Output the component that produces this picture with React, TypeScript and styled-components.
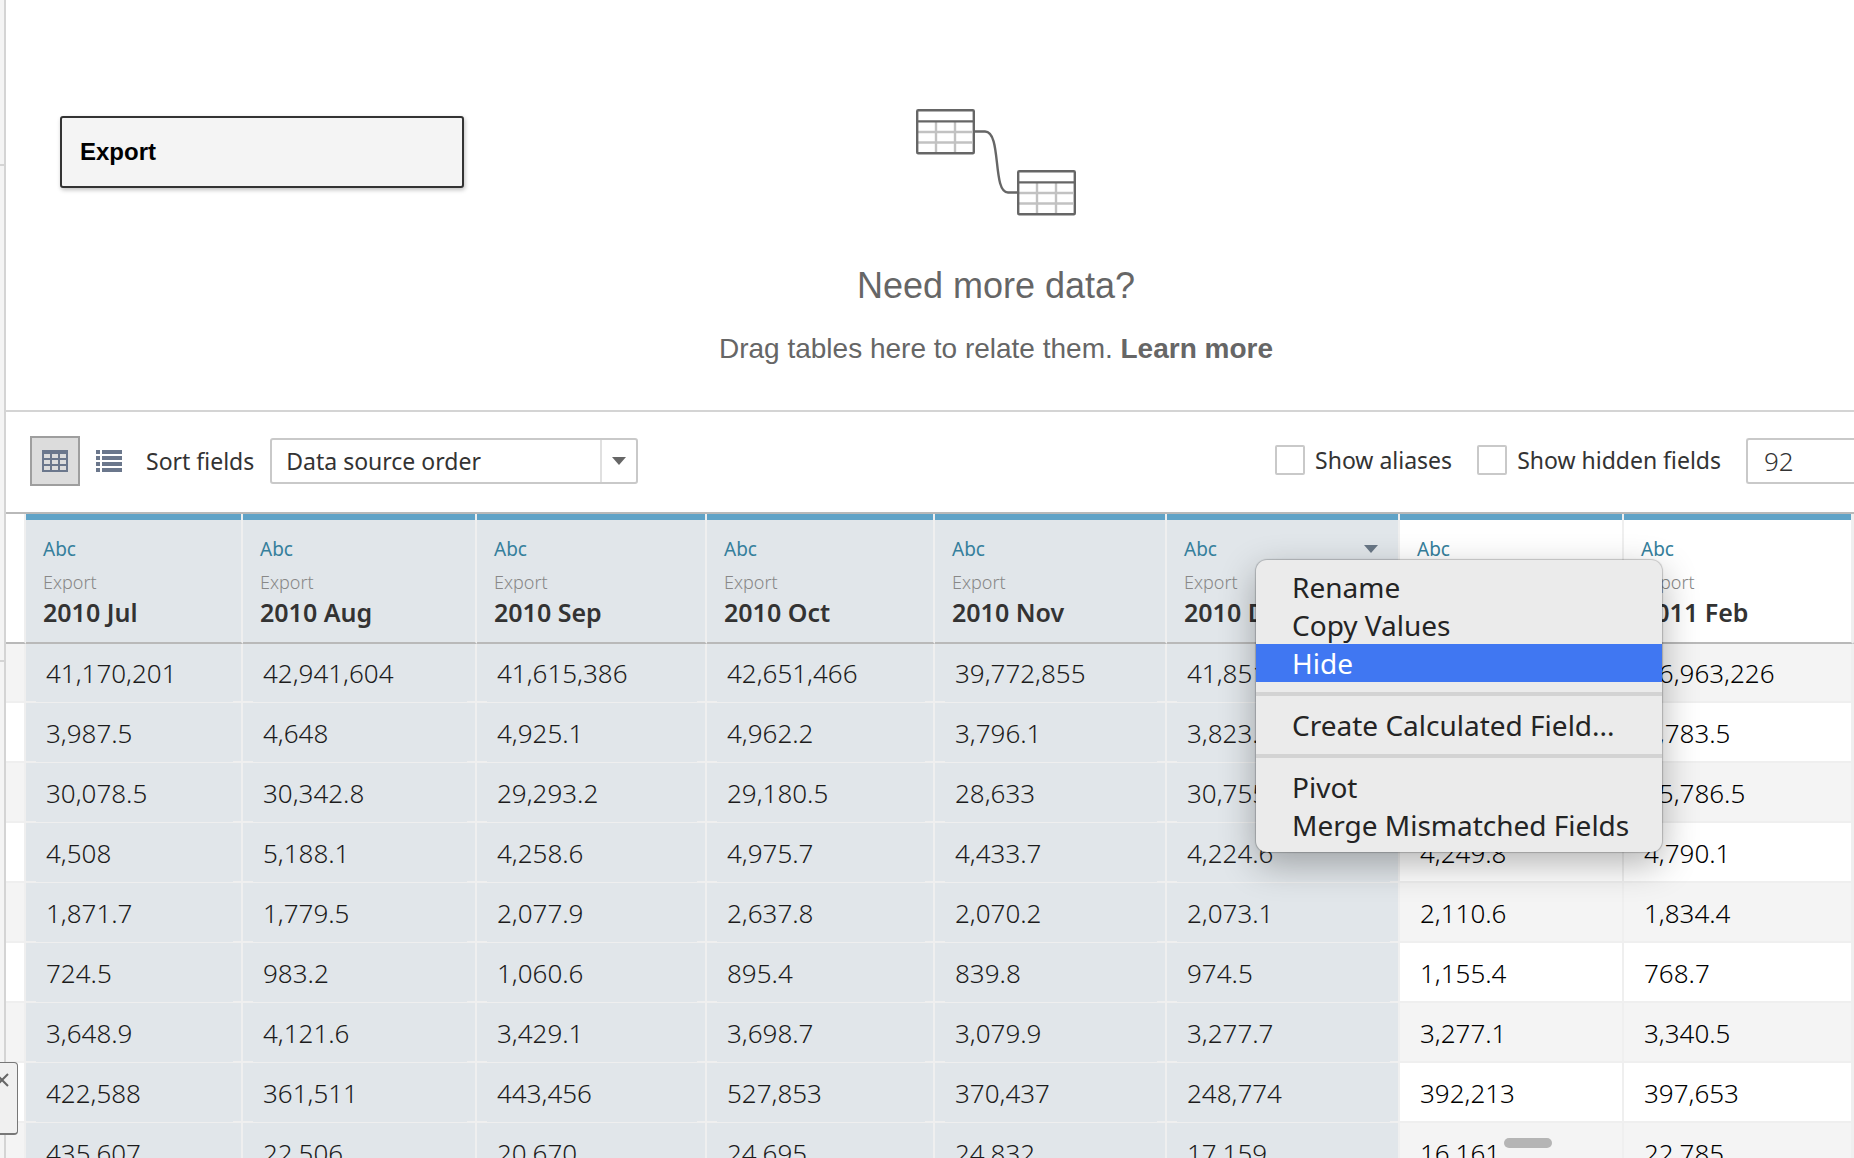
import React from 'react';
import styled, { createGlobalStyle, css } from 'styled-components';

const ui = css`
  font-family: 'Noto Sans', 'Open Sans', sans-serif;
`;

const GlobalStyle = createGlobalStyle`
  * { box-sizing: border-box; }
  body { margin: 0; background: #fff; overflow: hidden; }
  button, input, select { font: inherit; color: inherit; margin: 0; }
`;

const Shell = styled.div`
  ${ui}
  position: relative;
  display: flex;
  height: 100vh;
  overflow: hidden;
  color: #333;
`;

const SideStrip = styled.aside`
  flex: none;
  width: 6px;
  display: grid;
  grid-template-rows: 166px 496px 1fr;
  background: #f4f4f4;
  border-right: 2px solid #d4d4d4;
`;

const SideSection = styled.div`
  border-bottom: 2px solid #d4d4d4;
`;

const Main = styled.main`
  flex: 1;
  min-width: 0;
  display: flex;
  flex-direction: column;
`;

const Canvas = styled.section`
  flex: none;
  position: relative;
  height: 412px;
  padding-top: 109px;
  border-bottom: 2px solid #d4d4d4;
  font-family: 'Liberation Sans', Arial, sans-serif;
`;

const TableNode = styled.button`
  position: absolute;
  left: 54px;
  top: 116px;
  width: 404px;
  height: 72px;
  padding: 0 18px;
  text-align: left;
  background: #f4f4f4;
  border: 2px solid #333;
  border-radius: 3px;
  box-shadow: 1px 2px 4px rgba(0, 0, 0, 0.25);
  font-size: 24px;
  font-weight: 700;
  color: #000;
`;

const Hint = styled.div`
  display: flex;
  flex-direction: column;
  align-items: center;
  padding-left: 132px;
  color: #666;
`;

const HintTitle = styled.h2`
  margin: 49px 0 0;
  font-size: 36px;
  line-height: 40px;
  font-weight: 400;
`;

const HintText = styled.p`
  margin: 27px 0 0;
  font-size: 28px;
  line-height: 32px;
`;

const HintLink = styled.a`
  color: inherit;
  font-weight: 700;
  text-decoration: none;
`;

const Toolbar = styled.div`
  flex: none;
  display: flex;
  align-items: center;
  height: 102px;
  padding: 0 0 2px 24px;
  border-bottom: 2px solid #b9b9b9;
  font-size: 23px;
  white-space: nowrap;
`;

const ViewSwitch = styled.div`
  display: flex;
  gap: 4px;
`;

const ViewButton = styled.button<{ $active?: boolean }>`
  display: grid;
  place-items: center;
  width: 50px;
  height: 50px;
  padding: 0;
  color: #6b778c;
  background: ${(p) => (p.$active ? '#dcdcdc' : 'transparent')};
  border: 2px solid ${(p) => (p.$active ? '#9e9e9e' : 'transparent')};
`;

const SortLabel = styled.label`
  margin-left: 12px;
`;

const SelectBox = styled.div`
  display: flex;
  align-items: center;
  position: relative;
  width: 368px;
  height: 46px;
  margin-left: 16px;
  border: 2px solid #c9c9c9;
  border-radius: 3px;
`;

const Select = styled.select`
  appearance: none;
  width: 100%;
  height: 100%;
  padding: 0 14px;
  background: transparent;
  border: 0;
`;

const SelectArrow = styled.span`
  position: absolute;
  right: 0;
  top: 0;
  display: grid;
  place-items: center;
  width: 36px;
  height: 100%;
  border-left: 2px solid #e0e0e0;
  color: #666;
  pointer-events: none;
`;

const Options = styled.div`
  display: flex;
  align-items: center;
  gap: 25px;
  margin-left: auto;
`;

const CheckLabel = styled.label`
  display: flex;
  align-items: center;
  gap: 10px;
  margin-bottom: 3px;
`;

const Check = styled.input`
  appearance: none;
  width: 30px;
  height: 30px;
  background: #fff;
  border: 2px solid #c9c9c9;
  border-radius: 2px;
`;

const RowCount = styled.input`
  width: 108px;
  height: 46px;
  padding: 0 16px;
  font-size: 26px;
  font-weight: 300;
  background: #fff;
  border: 2px solid #c9c9c9;
  border-right: 0;
  border-radius: 3px 0 0 3px;
`;

const GridArea = styled.section`
  flex: 1;
  min-height: 0;
  position: relative;
  overflow: hidden;
`;

const Grid = styled.table`
  table-layout: fixed;
  width: 100%;
  border-collapse: separate;
  border-spacing: 0;
`;

const Col = styled.col<{ $w?: number }>`
  width: ${(p) => (p.$w ? `${p.$w}px` : 'auto')};
`;

const Head = styled.th<{ $selected?: boolean }>`
  position: relative;
  height: 130px;
  padding: 0;
  text-align: left;
  font-weight: 400;
  vertical-align: top;
  background: ${(p) => (p.$selected ? '#e1e6ea' : '#fff')};
  border-right: 2px solid #efefef;
  border-bottom: 2px solid #b9b9b9;
`;

const HeadBody = styled.div`
  height: 128px;
  padding: 16px 17px 0;
  border-top: 6px solid #60a3c7;
`;

const HeadTop = styled.div`
  display: flex;
  align-items: center;
  justify-content: space-between;
`;

const FieldType = styled.span`
  font-size: 19px;
  line-height: 26px;
  color: #357f9c;
`;

const FieldSource = styled.div`
  margin-top: 8px;
  font-size: 18px;
  line-height: 24px;
  font-weight: 300;
  color: #888;
`;

const FieldName = styled.div`
  font-size: 25px;
  line-height: 37px;
  font-weight: 600;
  color: #333;
  white-space: nowrap;
  overflow: hidden;
`;

const CaretButton = styled.button`
  display: grid;
  place-items: center;
  padding: 0 3px 1px 0;
  color: #697786;
  background: none;
  border: 0;
`;

const Row = styled.tr`
  &:nth-child(odd) td { background-color: #f4f4f4; }
  &:first-child td { height: 59px; }
`;

const Cell = styled.td<{ $selected?: boolean }>`
  height: 60px;
  padding: 0 0 11px 20px;
  vertical-align: bottom;
  font-size: 26px;
  line-height: 34px;
  font-weight: 300;
  color: #000;
  border-right: 2px solid #efefef;
  border-bottom: 2px solid #efefef;
  white-space: nowrap;
  ${(p) =>
    p.$selected &&
    css`
      ${Row}:nth-child(n) & {
        padding-bottom: 12px;
        background-color: #e1e6ea;
        background-image: linear-gradient(#efefef, #efefef), linear-gradient(#efefef, #efefef);
        background-position: left bottom, right bottom;
        background-size: 10px 1px, 8px 1px;
        background-repeat: no-repeat;
        border-bottom-width: 1px;
        color: #1c1c1c;
      }
    `}
`;

const Menu = styled.div`
  position: absolute;
  z-index: 2;
  left: 89px;
  top: 46px;
  width: 406px;
  padding: 8px 0;
  background: #ebebeb;
  border-radius: 11px;
  box-shadow: 0 0 1px 1px rgba(0, 0, 0, 0.2), 0 12px 36px rgba(0, 0, 0, 0.3);
`;

const MenuItem = styled.button<{ $active?: boolean }>`
  display: block;
  width: 100%;
  height: 38px;
  padding: 0 36px;
  text-align: left;
  font-size: 28px;
  line-height: 38px;
  font-weight: 400;
  white-space: nowrap;
  border: 0;
  color: ${(p) => (p.$active ? '#fff' : '#242424')};
  background: ${(p) => (p.$active ? '#4077f2' : 'transparent')};
`;

const MenuRule = styled.hr`
  height: 4px;
  margin: 10px 0;
  border: 0;
  background: #d3d3d3;
`;

const ScrollThumb = styled.div`
  position: absolute;
  right: 302px;
  bottom: 10px;
  width: 48px;
  height: 10px;
  border-radius: 5px;
  background: #b5b5b5;
`;

const ClosedPanel = styled.button`
  position: absolute;
  left: 0;
  bottom: 23px;
  width: 18px;
  height: 73px;
  padding: 10px 0 0;
  display: flex;
  align-items: flex-start;
  background: #f0f0f0;
  border: 1px solid #777;
  border-bottom-width: 2px;
  border-left: 0;
  border-radius: 0 4px 4px 0;
  color: #666;
`;

const Caret = ({ width }: { width: number }) => (
  <svg width={width} height="8" viewBox="0 0 14 8" preserveAspectRatio="none" aria-hidden="true">
    <path d="M0 0h14L7 8z" fill="currentColor" />
  </svg>
);

const MiniTable = ({ x, y }: { x: number; y: number }) => (
  <g transform={`translate(${x} ${y})`} fill="none">
    <path d="M20 13v30M39 13v30M2 23h54M2 33.500h54" stroke="#c2c2c2" strokeWidth="2.400" />
    <path d="M1 12.300h56" stroke="#666" strokeWidth="2.200" />
    <rect x="1.200" y="1.200" width="56.600" height="43" rx="1" stroke="#666" strokeWidth="2.400" />
  </g>
);

const RelateArt = () => (
  <svg width="160" height="108" viewBox="0 0 160 108" aria-hidden="true">
    <MiniTable x={0} y={0} />
    <MiniTable x={101} y={61} />
    <path
      d="M58 22.500h11C86 22.500 76 83.500 92 83.500h10"
      fill="none"
      stroke="#666"
      strokeWidth="2.400"
    />
  </svg>
);

const GridIcon = () => (
  <svg width="26" height="22" viewBox="0 0 26 22" aria-hidden="true">
    <path
      fill="currentColor"
      fillRule="evenodd"
      d="M0 0h26v22H0zM2 4v4h6V4zm8 0v4h6V4zm8 0v4h6V4zM2 10v4h6v-4zm8 0v4h6v-4zm8 0v4h6v-4zM2 16v4h6v-4zm8 0v4h6v-4zm8 0v4h6v-4z"
    />
  </svg>
);

const ListIcon = () => (
  <svg width="26" height="22" viewBox="0 0 26 22" aria-hidden="true">
    <path
      fill="currentColor"
      d="M0 0h4v4H0zM6 0h20v4H6zM0 6h4v4H0zM6 6h20v4H6zM0 12h4v4H0zM6 12h20v4H6zM0 18h4v4H0zM6 18h20v4H6z"
    />
  </svg>
);

const CloseIcon = () => (
  <svg width="9" height="14" viewBox="0 0 9 14" aria-hidden="true">
    <path d="M-4 1L8 13M8 1L-4 13" stroke="currentColor" strokeWidth="2" />
  </svg>
);

const fields = [
  { name: '2010 Jul', width: 217, selected: true },
  { name: '2010 Aug', width: 234, selected: true },
  { name: '2010 Sep', width: 230, selected: true },
  { name: '2010 Oct', width: 228, selected: true },
  { name: '2010 Nov', width: 232, selected: true },
  { name: '2010 Dec', width: 233, selected: true, open: true },
  { name: '2011 Jan', width: 224 },
  { name: '2011 Feb', width: 229 },
];

const rows = [
  ['41,170,201', '42,941,604', '41,615,386', '42,651,466', '39,772,855', '41,851,', '', '36,963,226'],
  ['3,987.5', '4,648', '4,925.1', '4,962.2', '3,796.1', '3,823.', '', '3,783.5'],
  ['30,078.5', '30,342.8', '29,293.2', '29,180.5', '28,633', '30,755', '', '25,786.5'],
  ['4,508', '5,188.1', '4,258.6', '4,975.7', '4,433.7', '4,224.6', '4,249.8', '4,790.1'],
  ['1,871.7', '1,779.5', '2,077.9', '2,637.8', '2,070.2', '2,073.1', '2,110.6', '1,834.4'],
  ['724.5', '983.2', '1,060.6', '895.4', '839.8', '974.5', '1,155.4', '768.7'],
  ['3,648.9', '4,121.6', '3,429.1', '3,698.7', '3,079.9', '3,277.7', '3,277.1', '3,340.5'],
  ['422,588', '361,511', '443,456', '527,853', '370,437', '248,774', '392,213', '397,653'],
  ['435,607', '22,506', '20,670', '24,695', '24,832', '17,159', '16,161', '22,785'],
];

const FieldMenu = () => (
  <Menu role="menu">
    <MenuItem role="menuitem">Rename</MenuItem>
    <MenuItem role="menuitem">Copy Values</MenuItem>
    <MenuItem role="menuitem" $active>Hide</MenuItem>
    <MenuRule />
    <MenuItem role="menuitem">Create Calculated Field...</MenuItem>
    <MenuRule />
    <MenuItem role="menuitem">Pivot</MenuItem>
    <MenuItem role="menuitem">Merge Mismatched Fields</MenuItem>
  </Menu>
);

export default function App() {
  return (
    <Shell>
      <GlobalStyle />
      <SideStrip>
        <SideSection />
        <SideSection />
      </SideStrip>
      <Main>
        <Canvas>
          <TableNode>Export</TableNode>
          <Hint>
            <RelateArt />
            <HintTitle>Need more data?</HintTitle>
            <HintText>
              Drag tables here to relate them. <HintLink href="#learn">Learn more</HintLink>
            </HintText>
          </Hint>
        </Canvas>
        <Toolbar>
          <ViewSwitch>
            <ViewButton $active aria-label="Grid view"><GridIcon /></ViewButton>
            <ViewButton aria-label="List view"><ListIcon /></ViewButton>
          </ViewSwitch>
          <SortLabel htmlFor="sort">Sort fields</SortLabel>
          <SelectBox>
            <Select id="sort">
              <option>Data source order</option>
            </Select>
            <SelectArrow><Caret width={14} /></SelectArrow>
          </SelectBox>
          <Options>
            <CheckLabel><Check type="checkbox" />Show aliases</CheckLabel>
            <CheckLabel><Check type="checkbox" />Show hidden fields</CheckLabel>
            <RowCount type="text" defaultValue="92" aria-label="Rows" />
          </Options>
        </Toolbar>
        <GridArea>
          <Grid>
            <colgroup>
              <Col $w={20} />
              {fields.map((f) => <Col key={f.name} $w={f.width} />)}
              <Col />
            </colgroup>
            <thead>
              <tr>
                <Head as="td" />
                {fields.map((f) => (
                  <Head key={f.name} $selected={f.selected} scope="col">
                    <HeadBody>
                      <HeadTop>
                        <FieldType>Abc</FieldType>
                        {f.open && (
                          <CaretButton aria-label="Field menu"><Caret width={14} /></CaretButton>
                        )}
                      </HeadTop>
                      <FieldSource>Export</FieldSource>
                      <FieldName>{f.name}</FieldName>
                    </HeadBody>
                    {f.open && <FieldMenu />}
                  </Head>
                ))}
                <Head as="td" />
              </tr>
            </thead>
            <tbody>
              {rows.map((r, i) => (
                <Row key={i}>
                  <Cell />
                  {r.map((v, j) => (
                    <Cell key={j} $selected={fields[j].selected}>{v}</Cell>
                  ))}
                  <Cell />
                </Row>
              ))}
            </tbody>
          </Grid>
          <ScrollThumb />
        </GridArea>
      </Main>
      <ClosedPanel aria-label="Close"><CloseIcon /></ClosedPanel>
    </Shell>
  );
}
